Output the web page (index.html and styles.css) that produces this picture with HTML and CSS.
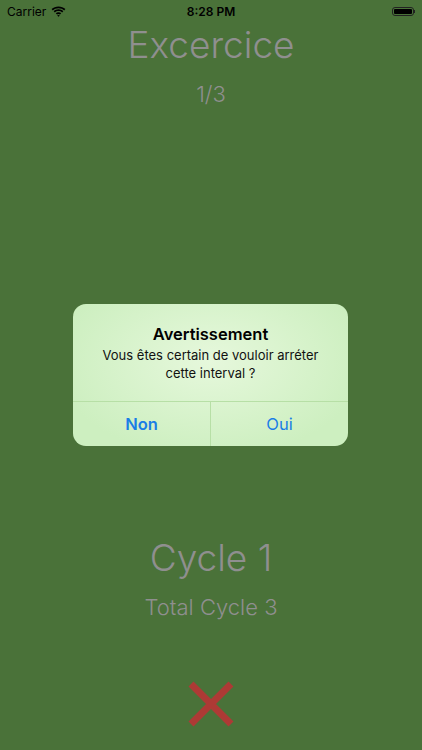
FILE: index.html
```html
<!doctype html>
<html lang="fr">
<head>
  <meta charset="UTF-8">
  <meta name="viewport" content="width=device-width, initial-scale=1.0">
  <title>Intervalle</title>
  <link rel="stylesheet" href="styles.css">
</head>
<body>
  <div id="app">
    <div class="status-bar">
      <div class="status-left">
        Carrier
        <svg class="wifi" width="15" height="11" viewBox="0 0 15 11">
          <path d="M7.5 2.2c2.2 0 4.2.8 5.7 2.2l1.2-1.3C12.6 1.4 10.2.4 7.5.4S2.4 1.4.6 3.1l1.2 1.3C3.3 3 5.3 2.2 7.5 2.2z" fill="#000"/>
          <path d="M7.5 5.1c1.4 0 2.6.5 3.6 1.4l1.2-1.3C11 4 9.3 3.3 7.5 3.3S4 4 2.7 5.2l1.2 1.3c1-.9 2.2-1.4 3.6-1.4z" fill="#000"/>
          <path d="M7.5 8c.6 0 1.1.2 1.5.6l1.2-1.3C9.5 6.6 8.5 6.2 7.5 6.2s-2 .4-2.7 1.1L6 8.6C6.4 8.2 6.9 8 7.5 8z" fill="#000"/>
          <path d="M7.5 10.8l1.3-1.4c-.3-.3-.8-.5-1.3-.5s-1 .2-1.3.5z" fill="#000"/>
        </svg>
      </div>
      <div class="status-time">8:28 PM</div>
      <div class="status-right">
        <div class="battery"><div class="battery-level"></div></div>
        <div class="battery-tip"></div>
      </div>
    </div>

    <div class="top">
      <div class="big-label">Excercice</div>
      <div class="small-label">1/3</div>
    </div>

    <div class="spacer"></div>

    <div class="bottom">
      <div class="big-label">Cycle 1</div>
      <div class="small-label">Total Cycle 3</div>
      <svg class="stop" width="48" height="48" viewBox="0 0 48 48">
        <path d="M4 4L44 44M44 4L4 44" stroke="#ad3a35" stroke-width="7"/>
      </svg>
    </div>

    <div class="alert">
      <div class="alert-body">
        <div class="alert-title">Avertissement</div>
        <div class="alert-message">Vous êtes certain de vouloir arréter cette interval ?</div>
      </div>
      <div class="alert-actions">
        <div class="alert-btn bold">Non</div>
        <div class="alert-btn">Oui</div>
      </div>
    </div>
  </div>
</body>
</html>
```

FILE: styles.css
```css
body {
    margin: 0;
    background: #4a7239;
    font-family: Inter, "Liberation Sans", sans-serif;
}

#app {
    position: relative;
    width: 422px;
    height: 750px;
    display: flex;
    flex-direction: column;
    overflow: hidden;
}

.status-bar {
    height: 22px;
    display: flex;
    align-items: center;
    justify-content: space-between;
    padding: 0 7px;
    font-size: 12px;
    color: #000;
}

.status-left {
    display: flex;
    align-items: center;
    gap: 5px;
    width: 100px;
}

.status-time {
    font-weight: 600;
}

.status-right {
    display: flex;
    align-items: center;
    justify-content: flex-end;
    width: 100px;
}

.battery {
    width: 22px;
    height: 9px;
    border: 1px solid #222;
    border-radius: 3px;
    padding: 1px;
    box-sizing: border-box;
}

.battery-level {
    width: 100%;
    height: 100%;
    background: #000;
    border-radius: 1px;
}

.battery-tip {
    width: 1px;
    height: 3px;
    background: #222;
}

.top, .bottom {
    display: flex;
    flex-direction: column;
    align-items: center;
    color: #8f8f8f;
}

.top {
    margin-top: 1px;
}

.big-label {
    font-size: 37px;
    font-weight: 300;
    line-height: 44px;
}

.small-label {
    font-size: 22px;
    font-weight: 300;
    line-height: 26px;
    margin-top: 14px;
}

.spacer {
    flex: 1;
}

.bottom {
    padding-bottom: 22px;
}

.stop {
    margin-top: 60px;
}

.alert {
    position: absolute;
    left: 73px;
    top: 304px;
    width: 275px;
    border-radius: 13px;
    overflow: hidden;
    background: radial-gradient(ellipse at 50% 40%, #e6f8dc, #cdefc0 80%);
    text-align: center;
}

.alert-body {
    padding: 20px 16px 19px;
}

.alert-title {
    font-size: 16.5px;
    font-weight: 600;
    color: #000;
    line-height: 20px;
}

.alert-message {
    font-size: 13px;
    color: #111;
    line-height: 18px;
    margin-top: 2px;
    padding: 0 8px;
}

.alert-actions {
    display: flex;
    border-top: 1px solid #b7dfa6;
    height: 44px;
}

.alert-btn {
    flex: 1;
    display: flex;
    align-items: center;
    justify-content: center;
    font-size: 16.5px;
    color: #1a7ee6;
}

.alert-btn + .alert-btn {
    border-left: 1px solid #b7dfa6;
}

.bold {
    font-weight: 600;
}
```
